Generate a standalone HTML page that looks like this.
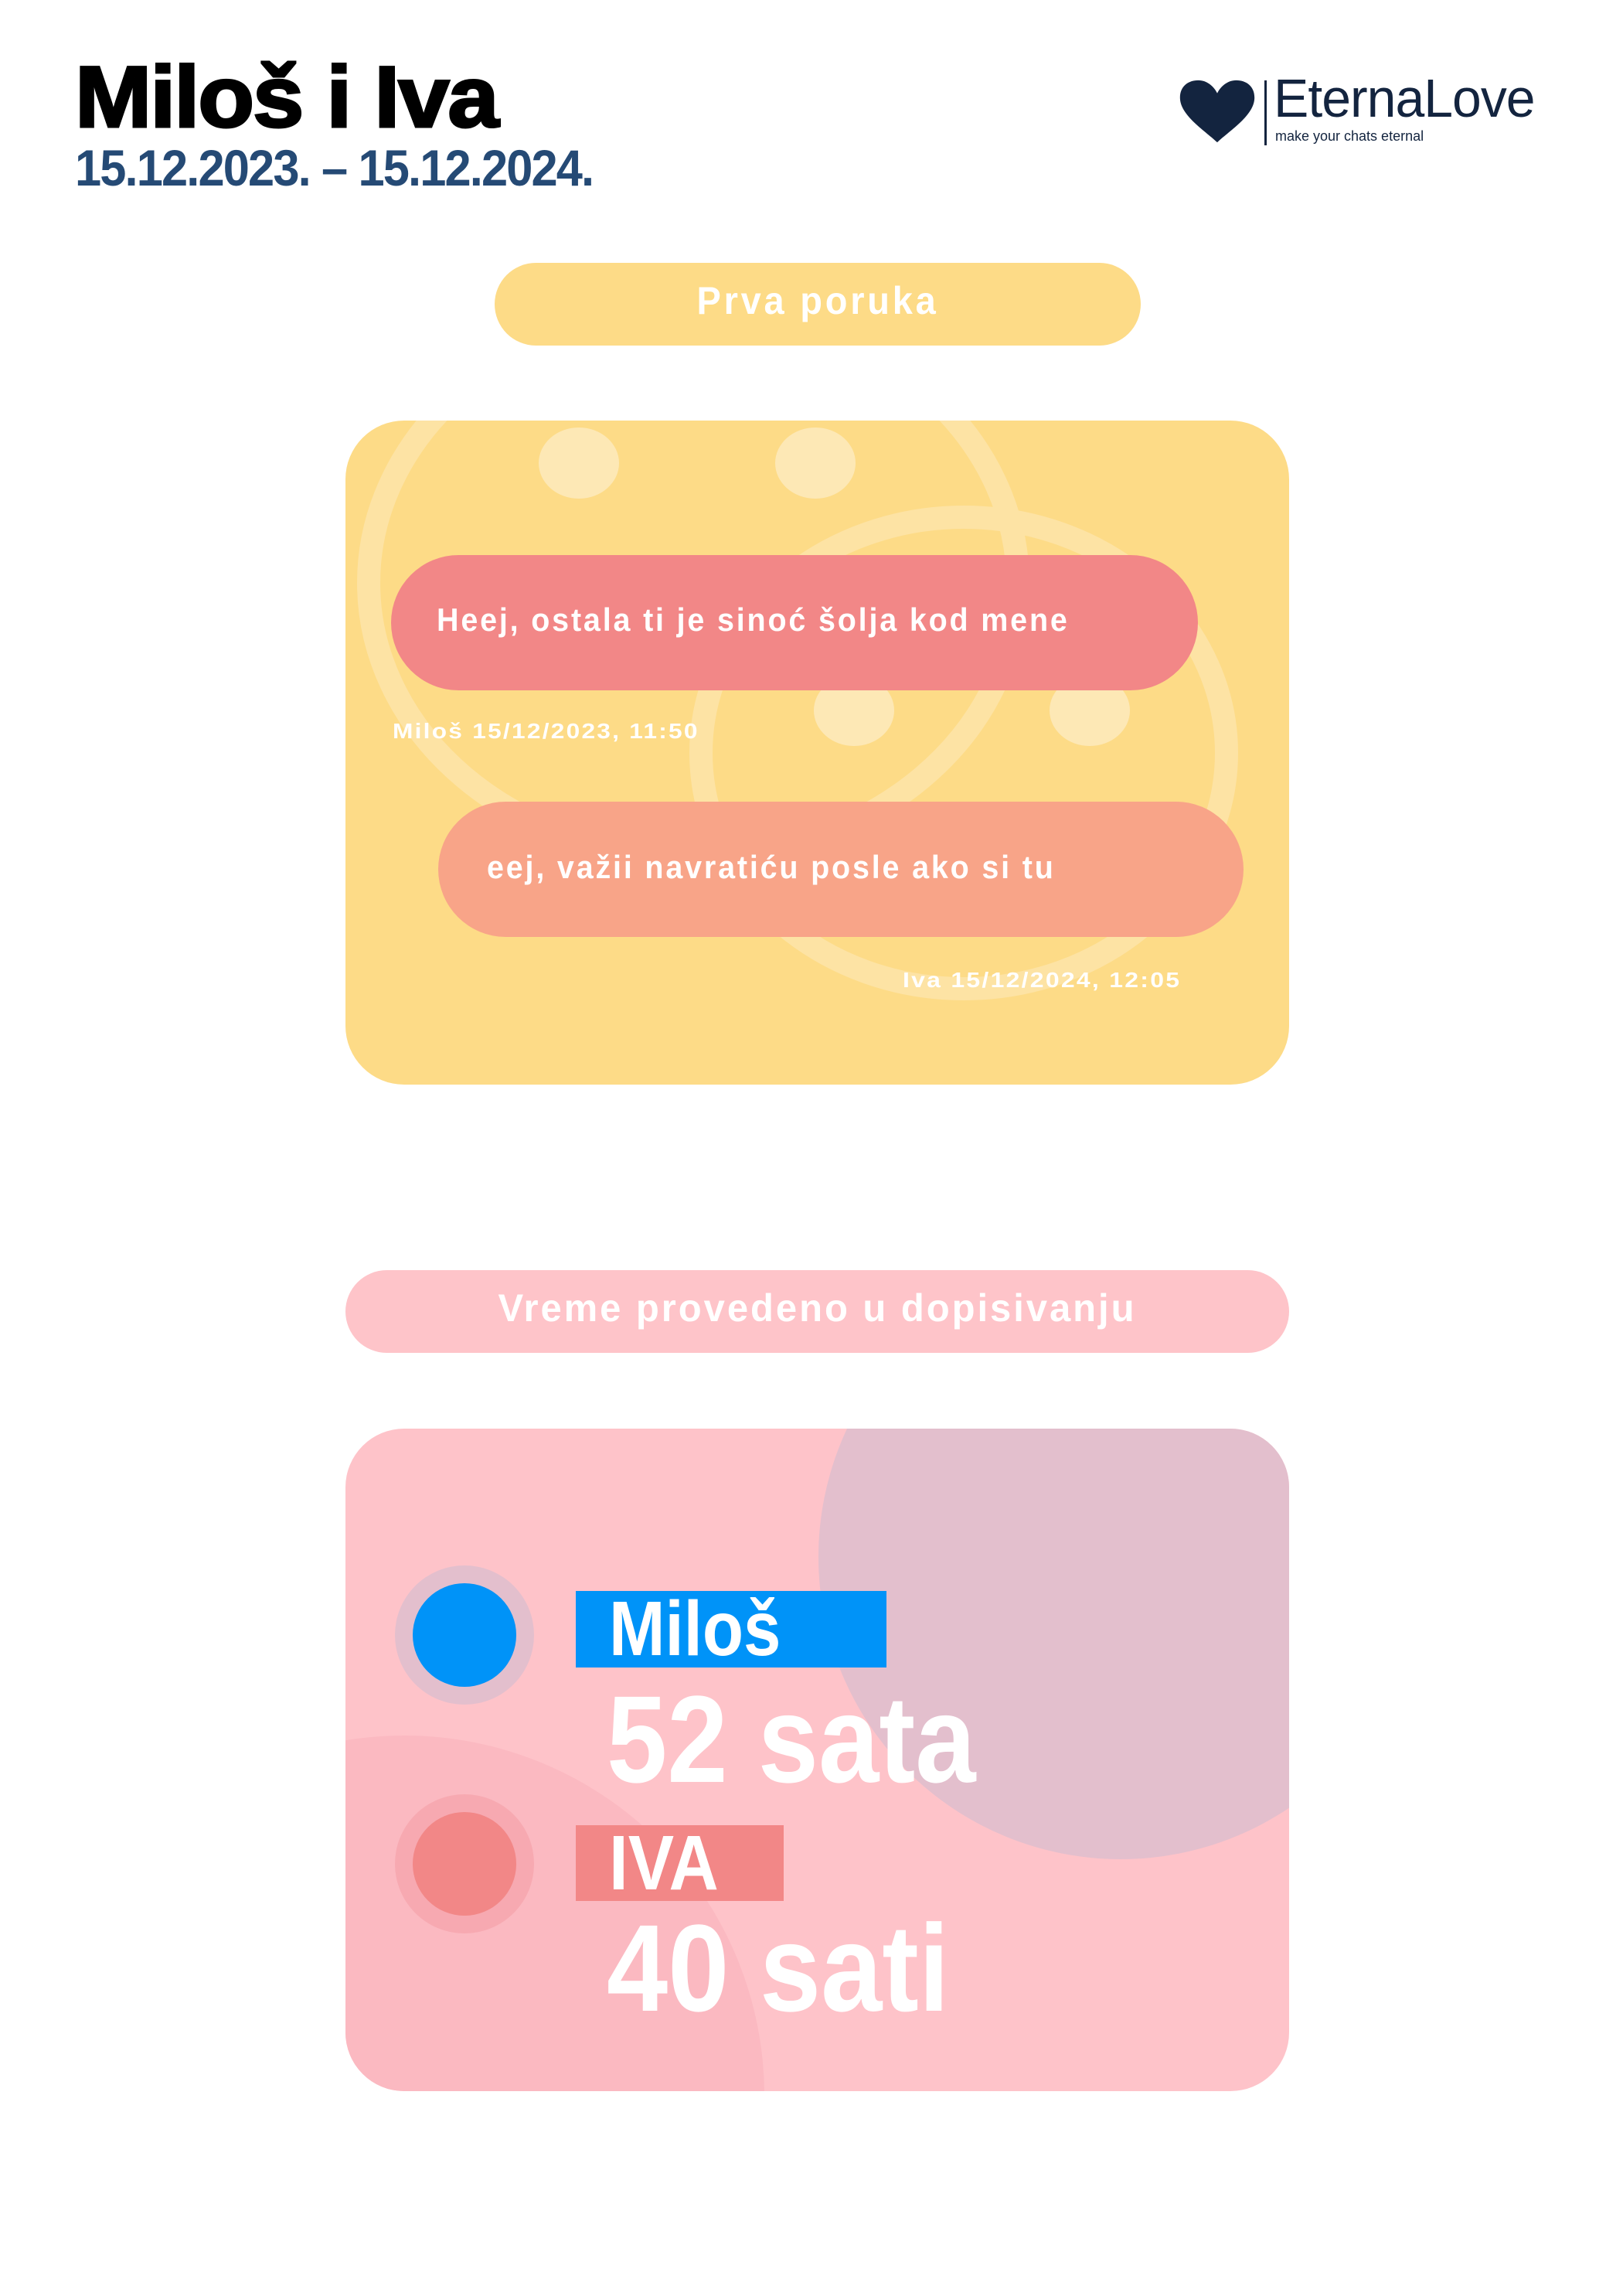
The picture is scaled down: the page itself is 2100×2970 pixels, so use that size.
<!DOCTYPE html>
<html><head><meta charset="utf-8"><style>
*{margin:0;padding:0;box-sizing:border-box}
html,body{width:2100px;height:2970px;overflow:hidden}
body{background:#fff;position:relative;font-family:"Liberation Sans",sans-serif}
.a{position:absolute}
.n{font-family:"Liberation Sans",sans-serif;font-weight:bold;color:#fff;white-space:nowrap;transform-origin:left top}
</style></head><body>
<div class="a" style="left:97px;top:70px;font-size:112px;font-weight:900;color:#000;letter-spacing:-2px;line-height:1;transform:scaleX(1.065);transform-origin:left;-webkit-text-stroke:3px #000">Miloš i Iva</div>
<div class="a n" style="left:97px;top:184px;font-size:66px;color:#254a75;letter-spacing:-2px;line-height:1;transform:scaleX(0.93)">15.12.2023. – 15.12.2024.</div>

<svg class="a" style="left:1525px;top:102px" width="100" height="84" viewBox="0 0 110 90" preserveAspectRatio="none"><path d="M55 88 C35 70 2 50 2 26 C2 10 14 2 28 2 C40 2 50 10 55 20 C60 10 70 2 82 2 C96 2 108 10 108 26 C108 50 75 70 55 88Z" fill="#13243f"/></svg>
<div class="a" style="left:1636px;top:104px;width:3px;height:84px;background:#13243f"></div>
<div class="a" style="left:1648px;top:92px;font-size:70px;color:#13243f;line-height:1;letter-spacing:-1px;transform:scaleX(0.97);transform-origin:left">EternaLove</div>
<div class="a" style="left:1650px;top:166px;font-size:18px;color:#13243f">make your chats eternal</div>

<div class="a" style="left:640px;top:340px;width:836px;height:107px;border-radius:54px;background:#fddb87"></div>
<div class="a n" style="left:640px;top:360px;width:836px;text-align:center;font-size:50px;letter-spacing:4px;transform:scaleX(0.94);transform-origin:center">Prva poruka</div>

<div class="a" style="left:447px;top:544px;width:1221px;height:859px;border-radius:76px;background:#fddb87;overflow:hidden">
<svg width="1221" height="859" style="position:absolute;left:0;top:0">
<g fill="none" stroke="#fde3a4" stroke-width="30">
<ellipse cx="450" cy="210" rx="420" ry="355"/>
<ellipse cx="800" cy="430" rx="340" ry="305"/>
</g>
<g fill="#fde8b5"><ellipse cx="302" cy="55" rx="52" ry="46"/><ellipse cx="608" cy="55" rx="52" ry="46"/><ellipse cx="658" cy="375" rx="52" ry="46"/><ellipse cx="963" cy="375" rx="52" ry="46"/></g>
</svg></div>
<div class="a" style="left:506px;top:718px;width:1044px;height:175px;border-radius:88px;background:#f28787"></div>
<div class="a n" style="left:565px;top:778px;font-size:42px;letter-spacing:3px;transform:scaleX(0.94)">Heej, ostala ti je sinoć šolja kod mene</div>
<div class="a n" style="left:508px;top:930px;font-size:28px;letter-spacing:2px;transform:scaleX(1.13)">Miloš 15/12/2023, 11:50</div>
<div class="a" style="left:567px;top:1037px;width:1042px;height:175px;border-radius:88px;background:#f8a488"></div>
<div class="a n" style="left:630px;top:1098px;font-size:42px;letter-spacing:3px;transform:scaleX(0.94)">eej, važii navratiću posle ako si tu</div>
<div class="a n" style="left:1168px;top:1252px;font-size:28px;letter-spacing:2px;transform:scaleX(1.14)">Iva 15/12/2024, 12:05</div>

<div class="a" style="left:447px;top:1643px;width:1221px;height:107px;border-radius:54px;background:#fec4c9"></div>
<div class="a n" style="left:447px;top:1663px;width:1221px;text-align:center;font-size:50px;letter-spacing:3px;transform:scaleX(0.98);transform-origin:center">Vreme provedeno u dopisivanju</div>

<div class="a" style="left:447px;top:1848px;width:1221px;height:857px;border-radius:76px;background:#fec3c9;overflow:hidden">
<div class="a" style="left:612px;top:-225px;width:782px;height:782px;border-radius:50%;background:#e3bfcd"></div>
<div class="a" style="left:-390px;top:397px;width:932px;height:932px;border-radius:50%;background:#fbb9c1"></div>
</div>
<div class="a" style="left:511px;top:2025px;width:180px;height:180px;border-radius:50%;background:#e3bfcd"></div>
<div class="a" style="left:534px;top:2048px;width:134px;height:134px;border-radius:50%;background:#0093f8"></div>
<div class="a" style="left:511px;top:2321px;width:180px;height:180px;border-radius:50%;background:#f7a9b1"></div>
<div class="a" style="left:534px;top:2344px;width:134px;height:134px;border-radius:50%;background:#f28787"></div>
<div class="a" style="left:745px;top:2058px;width:402px;height:99px;background:#0093f8"></div>
<div class="a n" style="left:788px;top:2055px;font-size:100px;line-height:1.05;transform:scaleX(0.87)">Miloš</div>
<div class="a n" style="left:785px;top:2170px;font-size:160px;line-height:1;transform:scaleX(0.88)">52 sata</div>
<div class="a" style="left:745px;top:2361px;width:269px;height:98px;background:#f28787"></div>
<div class="a n" style="left:788px;top:2358px;font-size:100px;line-height:1.05;transform:scaleX(0.89)">IVA</div>
<div class="a n" style="left:785px;top:2466px;font-size:160px;line-height:1;transform:scaleX(0.89)">40 sati</div>
</body></html>
